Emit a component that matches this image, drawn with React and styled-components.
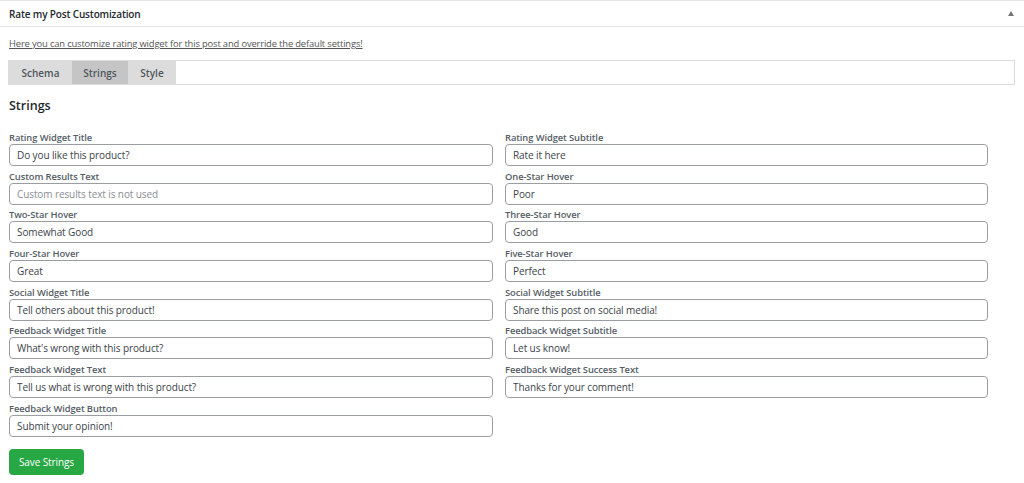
import React from "react";
import styled, { createGlobalStyle } from "styled-components";

const GlobalStyle = createGlobalStyle`
  html, body {
    margin: 0;
    padding: 0;
    background: #fff;
  }
  body {
    font-family: "Open Sans", "Noto Sans", sans-serif;
    color: #32373c;
  }
`;

const Postbox = styled.div`
  width: 1024px;
  height: 483px;
  overflow: hidden;
  background: #fff;
  border-top: 1px solid #e2e4e7;
`;

const Header = styled.div`
  display: flex;
  align-items: center;
  justify-content: space-between;
  height: 25px;
  padding: 0 10px 0 9px;
  border-bottom: 1px solid #e2e4e7;
`;

const Title = styled.h2`
  margin: 0;
  font-size: 10px;
  font-weight: 600;
  color: #23282d;
  letter-spacing: -0.15px;
`;

const Toggle = styled.span`
  width: 0;
  height: 0;
  border-left: 3px solid transparent;
  border-right: 3px solid transparent;
  border-bottom: 5px solid #72777c;
`;

const Body = styled.div`
  padding: 10px 9px 0 9px;
`;

const Intro = styled.a`
  display: block;
  font-size: 9.4px;
  line-height: 14px;
  color: #555;
  text-decoration: underline;
  letter-spacing: -0.15px;
`;

const TabBar = styled.div`
  display: flex;
  margin-top: 9px;
  margin-left: -1px;
  width: 1005px;
  height: 23px;
  border: 1px solid #dcdcde;
`;

const Tab = styled.div`
  display: flex;
  align-items: center;
  justify-content: center;
  width: ${(p) => p.$w}px;
  background: ${(p) => (p.$active ? "#c5c5c5" : "#dcdcdc")};
  font-size: 10px;
  font-weight: 600;
  color: #50575e;
`;

const Heading = styled.h3`
  margin: 12px 0 0 0;
  font-size: 12.5px;
  line-height: 18px;
  font-weight: 600;
  color: #23282d;
`;

const Grid = styled.div`
  display: grid;
  grid-template-columns: 484px 483px;
  column-gap: 12px;
  row-gap: 3.7px;
  margin-top: 16px;
`;

const Field = styled.div`
  display: flex;
  flex-direction: column;
`;

const Label = styled.label`
  font-size: 9.4px;
  line-height: 13px;
  font-weight: 600;
  color: #555d66;
  letter-spacing: -0.1px;
`;

const Input = styled.input`
  box-sizing: border-box;
  height: 22px;
  margin: 0;
  padding: 0 7px;
  border: 1px solid #9a9ea3;
  border-radius: 4px;
  font-family: "Open Sans", "Noto Sans", sans-serif;
  font-size: 10px;
  color: #3c434a;
  background: #fff;
  letter-spacing: -0.1px;
  &::placeholder {
    color: #8a8e93;
  }
`;

const SaveButton = styled.button`
  margin-top: 12px;
  width: 75px;
  height: 26px;
  padding: 0;
  border: none;
  border-radius: 4px;
  background: #28a745;
  color: #fff;
  font-family: "Open Sans", "Noto Sans", sans-serif;
  font-size: 10px;
  letter-spacing: -0.1px;
`;

const fields = [
  ["Rating Widget Title", "Do you like this product?"],
  ["Rating Widget Subtitle", "Rate it here"],
  ["Custom Results Text", "", "Custom results text is not used"],
  ["One-Star Hover", "Poor"],
  ["Two-Star Hover", "Somewhat Good"],
  ["Three-Star Hover", "Good"],
  ["Four-Star Hover", "Great"],
  ["Five-Star Hover", "Perfect"],
  ["Social Widget Title", "Tell others about this product!"],
  ["Social Widget Subtitle", "Share this post on social media!"],
  ["Feedback Widget Title", "What's wrong with this product?"],
  ["Feedback Widget Subtitle", "Let us know!"],
  ["Feedback Widget Text", "Tell us what is wrong with this product?"],
  ["Feedback Widget Success Text", "Thanks for your comment!"],
  ["Feedback Widget Button", "Submit your opinion!"],
];

const tabs = [
  { name: "Schema", w: 63 },
  { name: "Strings", w: 56, active: true },
  { name: "Style", w: 48 },
];

export default function App() {
  return (
    <>
      <GlobalStyle />
      <Postbox>
        <Header>
          <Title>Rate my Post Customization</Title>
          <Toggle />
        </Header>
        <Body>
          <Intro>
            Here you can customize rating widget for this post and override the
            default settings!
          </Intro>
          <TabBar>
            {tabs.map((t) => (
              <Tab key={t.name} $w={t.w} $active={t.active}>
                {t.name}
              </Tab>
            ))}
          </TabBar>
          <Heading>Strings</Heading>
          <Grid>
            {fields.map(([label, value, placeholder]) => (
              <Field key={label}>
                <Label>{label}</Label>
                <Input defaultValue={value} placeholder={placeholder} />
              </Field>
            ))}
          </Grid>
          <SaveButton>Save Strings</SaveButton>
        </Body>
      </Postbox>
    </>
  );
}
